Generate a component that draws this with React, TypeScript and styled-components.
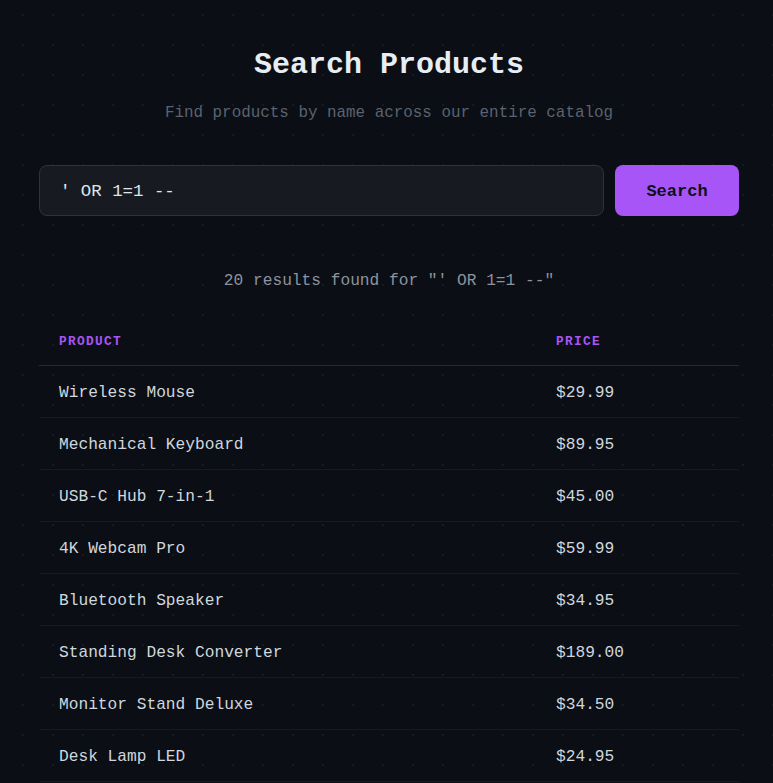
import styled, { createGlobalStyle } from "styled-components";

type Product = {
  name: string;
  price: number;
};

const query = "' OR 1=1 --";

const products: Product[] = [
  { name: "Wireless Mouse", price: 29.99 },
  { name: "Mechanical Keyboard", price: 89.95 },
  { name: "USB-C Hub 7-in-1", price: 45.0 },
  { name: "4K Webcam Pro", price: 59.99 },
  { name: "Bluetooth Speaker", price: 34.95 },
  { name: "Standing Desk Converter", price: 189.0 },
  { name: "Monitor Stand Deluxe", price: 34.5 },
  { name: "Desk Lamp LED", price: 24.95 },
  { name: "Ergonomic Chair Cushion", price: 39.99 },
  { name: "Laptop Sleeve 15\"", price: 19.99 },
  { name: "Noise Cancelling Headphones", price: 149.0 },
  { name: "Portable SSD 1TB", price: 109.99 },
  { name: "Wireless Charger Pad", price: 22.5 },
  { name: "HDMI Cable 2m", price: 9.99 },
  { name: "Cable Organizer Kit", price: 14.95 },
  { name: "Webcam Cover Slider", price: 5.99 },
  { name: "Mouse Pad XL", price: 17.99 },
  { name: "Smart Power Strip", price: 32.0 },
  { name: "USB Microphone", price: 79.95 },
  { name: "Tablet Stand", price: 27.5 },
];

const mono = `"Courier New", Courier, "Liberation Mono", monospace`;

const App = () => {
  return (
    <>
      <GlobalStyle />
      <Page>
        <Container>
          <Title>Search Products</Title>
          <Subtitle>Find products by name across our entire catalog</Subtitle>

          <SearchForm onSubmit={(e) => e.preventDefault()}>
            <SearchInput type="text" defaultValue={query} />
            <SearchButton type="submit">Search</SearchButton>
          </SearchForm>

          <ResultCount>
            {products.length} results found for "{query}"
          </ResultCount>

          <Table>
            <colgroup>
              <col />
              <col style={{ width: 203 }} />
            </colgroup>
            <thead>
              <tr>
                <HeadCell>Product</HeadCell>
                <HeadCell>Price</HeadCell>
              </tr>
            </thead>
            <tbody>
              {products.map((p) => (
                <Row key={p.name}>
                  <Cell>{p.name}</Cell>
                  <Cell>${p.price.toFixed(2)}</Cell>
                </Row>
              ))}
            </tbody>
          </Table>
        </Container>
      </Page>
    </>
  );
};

const GlobalStyle = createGlobalStyle`
  html, body {
    margin: 0;
    padding: 0;
    background-color: #0b0e15;
  }
  body {
    font-family: ${mono};
    color: #c9d1d9;
  }
  ::-webkit-scrollbar {
    width: 0;
  }
`;

const Page = styled.div`
  min-height: 100vh;
  padding: 47px 34px 40px 39px;
  box-sizing: border-box;
  background-color: #0b0e15;
  background-image: radial-gradient(circle, #161a23 1px, transparent 1.3px);
  background-size: 30px 30px;
  background-position: 8px 0;
`;

const Container = styled.div`
  max-width: 700px;
  margin: 0 auto;
  display: flex;
  flex-direction: column;
`;

const Title = styled.h1`
  margin: 0;
  font-size: 30px;
  line-height: 36px;
  font-weight: 700;
  text-align: center;
  color: #e6edf3;
`;

const Subtitle = styled.p`
  margin: 21px 0 0;
  font-size: 15.9px;
  line-height: 19px;
  text-align: center;
  color: #5a636e;
`;

const SearchForm = styled.form`
  margin-top: 42px;
  display: flex;
  gap: 11px;
  height: 51px;
`;

const SearchInput = styled.input`
  flex: 1;
  min-width: 0;
  box-sizing: border-box;
  height: 100%;
  padding: 1px 20px 0;
  border: 1px solid #2d333b;
  border-radius: 8px;
  background-color: #171a20;
  color: #dfe5ec;
  font-family: ${mono};
  font-size: 17.4px;
  outline: none;
`;

const SearchButton = styled.button`
  width: 124px;
  height: 100%;
  padding-top: 2px;
  border: none;
  border-radius: 8px;
  background-color: #a855f7;
  color: #0d1117;
  font-family: ${mono};
  font-size: 17px;
  font-weight: 700;
  cursor: pointer;
`;

const ResultCount = styled.p`
  margin: 55px 0 0;
  font-size: 16.2px;
  line-height: 20px;
  text-align: center;
  color: #8b949e;
`;

const Table = styled.table`
  margin-top: 27px;
  width: 100%;
  border-collapse: collapse;
  table-layout: fixed;
`;

const HeadCell = styled.th`
  padding: 16px 20px;
  line-height: 15px;
  text-align: left;
  font-size: 12.8px;
  font-weight: 700;
  letter-spacing: 1.3px;
  text-transform: uppercase;
  color: #a855f7;
  border-bottom: 1px solid #262b33;
`;

const Row = styled.tr`
  border-bottom: 1px solid #151920;
`;

const Cell = styled.td`
  padding: 18px 20px 14px;
  line-height: 19px;
  font-size: 16.2px;
  color: #d0d7de;
  white-space: nowrap;
`;

export default App;
